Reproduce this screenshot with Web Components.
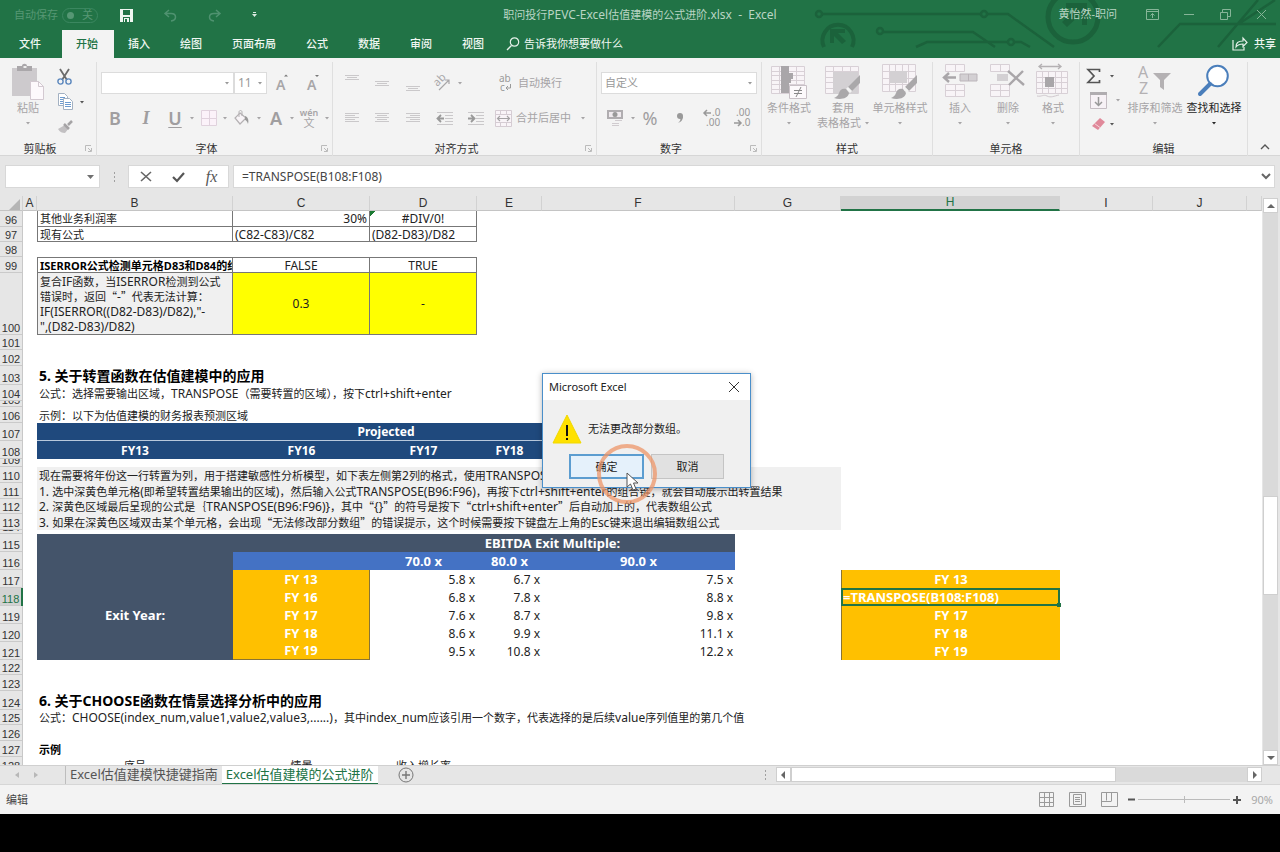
<!DOCTYPE html>
<html lang="zh-CN">
<head>
<meta charset="utf-8">
<title>职问投行PEVC-Excel估值建模的公式进阶.xlsx - Excel</title>
<style>
html,body{height:100%;margin:0}
body{background:#000;font:11px/16px "Noto Sans","Noto Sans CJK SC",sans-serif;color:#262626}
</style>
</head>
<body>
<xl-app></xl-app>
<script>
const BASE = `:host,*{box-sizing:border-box}
button{font:inherit;color:inherit;background:none;border:0;padding:0;margin:0;display:flex;align-items:center;justify-content:center}
input,select{font:inherit;color:inherit;margin:0;padding:0;border:0;border-radius:0;background:none;outline:none;min-width:0}
.k{font-family:"Noto Sans CJK SC",sans-serif;font-size:11px}`;

function define(name, css, html) {
  const tpl = document.createElement('template');
  customElements.define(name, class extends HTMLElement {
    connectedCallback() {
      if (this.shadowRoot) return;
      const root = this.attachShadow({ mode: 'open' });
      tpl.innerHTML = `<style>${BASE}${css}</style>` + (typeof html === 'function' ? html(this) : html);
      root.append(tpl.content.cloneNode(true));
    }
  });
}

/* Chinese runs are set one step smaller than the Latin text around them. */
const mix = (t) => t.replace(/[“”\u3000-\u9fff\uff00-\uffef]+/g, (m) => `<span class="k">${m}</span>`);

const lines = (list) => list.map(([a, y, b]) => `<path d="M${a} ${y}.5H${b}"/>`).join('');
const L = '#d8d0d6';
const grid = (x, y, w, h, c, r) => {
  let d = `M${x}.5 ${y}.5h${w}v${h}h-${w}z`;
  for (let i = 1; i < c; i++) d += `M${x + Math.round(w * i / c)}.5 ${y}.5v${h}`;
  for (let i = 1; i < r; i++) d += `M${x}.5 ${y + Math.round(h * i / r)}.5h${w}`;
  return `<path d="${d}" fill="#f8f4f7" stroke="${L}"/>`;
};
const BRUSH = `<path d="M35 11v8l-8 8-4-4z" fill="#aaa8aa"/><path d="M23 23l4 4-2 2-4-4z" fill="#f3f3f3"/><path d="M21 25c-4-1-6 1-7 4s-3 4-5 5c6 2 14 1 15-5z" fill="#aaa8aa"/>`;
const ICONS = {
  arrow: [4, 2, `<path d="M0 0h4L2 2.500z" fill="currentColor"/>`],
  arrowBig: [7, 4, `<path d="M0 0h7L3.500 4z" fill="#707070"/>`],
  save: [13, 13, `<path d="M0 0h13v13H0z" fill="#eef6f0"/><path d="M3 1h7v5H3zM3 8h7v5H3z" fill="#217346"/><path d="M4 9h5v4H7v-3H5v3H4z" fill="#eef6f0"/>`],
  undo: [13, 13, `<path d="M5 1L1 4.500l4 3.500M1 4.500h6c6 0 6 7 0 7.500" fill="none" stroke="#4f9270" stroke-width="1.500"/>`],
  redo: [13, 13, `<path d="M8 1l4 3.500L8 8M12 4.500H6c-6 0-6 7 0 7.500" fill="none" stroke="#4f9270" stroke-width="1.500"/>`],
  qat: [5, 6, `<path d="M1 .5h3" stroke="#dcebe2"/><path d="M0 2h5L2.500 5z" fill="#dcebe2"/>`],
  ribbonOpt: [13, 11, `<path d="M.5.5h12v10H.5zM.5 2.500h12M6.500 9V4.500M4.500 6.500l2-2 2 2" fill="none" stroke="#86b598"/>`],
  min: [11, 11, `<path d="M0 5.500h10" stroke="#86b598"/>`],
  restore: [11, 11, `<path d="M.5 3.500h7v7h-7zM2.500 3.500v-3h8v7h-3" fill="none" stroke="#86b598"/>`],
  close: [11, 11, `<path d="M1 1l9 9M10 1l-9 9" fill="none" stroke="#86b598"/>`],
  search: [14, 14, `<circle cx="8.500" cy="5" r="4.200" fill="none" stroke="#e4f0e8" stroke-width="1.200"/><path d="M5.500 8.500L1 13" stroke="#e4f0e8" stroke-width="1.300"/>`],
  share: [16, 14, `<path d="M1 3v10h11v-3M4 10c0-4 2-6 7-6V1l4 4.500-4 4V7C8 7 6 7.500 4 10z" fill="none" stroke="#e4f0e8" stroke-width="1.200"/>`],
  paste: [34, 36, `<path d="M1 4h25v28H1z" fill="#cdcacd"/><path d="M6 2h5c0-3 5-3 5 0h5v5H6z" fill="#aaa7aa"/><path d="M12.500 2h3v2h-3z" fill="#eee"/><path d="M19.500 17.500h8l5 5v13h-13z" fill="#fdf9fc" stroke="#d3c9d1"/><path d="M27.500 17.500v5h5" fill="none" stroke="#d3c9d1"/>`],
  cut: [16, 16, `<path d="M3 0l7 11M12 0L5 11" stroke="#6b6b6b" stroke-width="1.800"/><circle cx="3.500" cy="12.500" r="2.600" fill="none" stroke="#5b87bd" stroke-width="1.400"/><circle cx="11.500" cy="12.500" r="2.600" fill="none" stroke="#5b87bd" stroke-width="1.400"/>`],
  copy: [16, 17, `<path d="M1.500.5h6l3 3v9h-9z" fill="#fff" stroke="#a3b1c2"/><path d="M3 4.500h5M3 6.500h3M3 8.500h3M3 10.500h3" stroke="#6d9bcf"/><path d="M6.500 5.500h6l3 3v8h-9z" fill="#fff" stroke="#a3b1c2"/><path d="M8 9.500h6M8 11.500h6M8 13.500h6" stroke="#6d9bcf"/>`],
  brush: [15, 14, `<path d="M9 6l2 2-4 5c-3 0-5-1-7-4l7-4z" fill="#c2c0c2"/><path d="M6 4l5 5M10 5l4-4" stroke="#a5a3a5" stroke-width="2.500"/>`],
  growA: [13, 18, `<text x="0" y="16" font-size="14" font-weight="600" fill="#a8a6a8" font-family="Noto Sans">A</text><path d="M8 2.500l2-2 2 2z" fill="#777"/>`],
  shrinkA: [13, 18, `<text x="0" y="16" font-size="14" font-weight="600" fill="#a8a6a8" font-family="Noto Sans">A</text><path d="M8 1h4l-2 2z" fill="#777"/>`],
  border: [17, 17, `<path d="M.5.5h15v15H.5zM8.500.5v15M.5 8.500h15" fill="#fbf2f9" stroke="#e0d2dd"/>`],
  bucket: [16, 16, `<path d="M6 3l6 5-6 6-5-6z" fill="#f8f4f7" stroke="#b4b1b3" stroke-width="1.200"/><path d="M5 7V2c0-2 3-2 3 0v4" fill="none" stroke="#b4b1b3"/><path d="M11 6c3 1 4 4 3 8-1-3-2-4-3-4z" fill="#999"/>`],
  alTop: [16, 20, `<g stroke="#cac8ca">${lines([[1,2,15],[3,4,13],[1,6,15]])}</g>`],
  alMid: [16, 20, `<g stroke="#cac8ca">${lines([[1,8,15],[3,10,13],[1,12,15]])}</g>`],
  alBot: [16, 20, `<g stroke="#cac8ca">${lines([[1,13,15],[3,15,13],[1,17,15]])}</g>`],
  alL: [16, 12, `<g stroke="#cac8ca">${lines([[1,1,15],[1,3,11],[1,5,15],[1,7,11],[1,9,15]])}</g>`],
  alC: [16, 12, `<g stroke="#cac8ca">${lines([[1,1,15],[3,3,13],[1,5,15],[3,7,13],[1,9,15]])}</g>`],
  alR: [16, 12, `<g stroke="#cac8ca">${lines([[1,1,15],[5,3,15],[1,5,15],[5,7,15],[1,9,15]])}</g>`],
  orient: [18, 18, `<text x="1" y="11" font-size="11" fill="#a8a6a8" font-family="Noto Sans" transform="rotate(-45 5 8)">ab</text><path d="M6 16L16 6M12 6h4v4" fill="none" stroke="#a8a6a8" stroke-width="1.200"/>`],
  outdent: [18, 13, `<g stroke="#cac8ca">${lines([[1,0,17],[9,3,17],[9,6,17],[9,9,17],[1,12,17]])}</g><path d="M8 6.500H2M5 3L1.500 6.500 5 10" fill="none" stroke="#999" stroke-width="1.800"/>`],
  indent: [18, 13, `<g stroke="#cac8ca">${lines([[1,0,17],[9,3,17],[9,6,17],[9,9,17],[1,12,17]])}</g><path d="M1 6.500h6M4 3l3.500 3.500L4 10" fill="none" stroke="#999" stroke-width="1.800"/>`],
  wrap: [14, 17, `<text x="0" y="7" font-size="10" fill="#999" font-family="Noto Sans">ab</text><text x="1" y="16" font-size="10" fill="#999" font-family="Noto Sans">c</text><path d="M11.500 9v4H7M9 11l-2 2 2 2" fill="none" stroke="#999"/>`],
  merge: [17, 17, `<path d="M.5.5h16v16H.5zM.5 4.500h16M.5 12.500h16M5.500.5v4M11.500.5v4M5.500 12.500v4M11.500 12.500v4" fill="#f9f4f8" stroke="#d5ccd3"/><path d="M2 8.500h13M5 6L2.500 8.500 5 11M12 6l2.500 2.500L12 11" fill="none" stroke="#a5a3a5" stroke-width="1.200"/>`],
  money: [18, 18, `<path d="M1 1h16v9H1z" fill="#b0adb0"/><path d="M3 3h12v5H3z" fill="#efeaee"/><circle cx="9" cy="5.500" r="2.500" fill="#999"/><path d="M9 11.500h7M6 14.500h7M6 16.500h7" stroke="#d0cbcf"/>`],
  comma: [8, 12, `<circle cx="4" cy="4" r="3" fill="#999"/><path d="M7 4c0 4-2 6-5 7 2-2 3-3 2-5z" fill="#999"/>`],
  decL: [18, 20, `<g font-size="10" fill="#999" font-family="Noto Sans"><text x="9" y="8">.0</text><text x="3" y="18">.00</text></g><path d="M8 5H2M4 2L1 5l3 3" fill="none" stroke="#999" stroke-width="1.500"/>`],
  decR: [18, 20, `<g font-size="10" fill="#999" font-family="Noto Sans"><text x="3" y="8">.00</text><text x="9" y="18">.0</text></g><path d="M1 15h6M5 12l3 3-3 3" fill="none" stroke="#999" stroke-width="1.500"/>`],
  cond: [36, 36, grid(0,2,33,27,4,6) + `<path d="M10 2h8v7h4v6h-2v4h-2v10h-8z" fill="#a9a6a9"/><path d="M18.500 21.500h17v13h-17z" fill="#fcf9fb" stroke="#c8c0c6"/><path d="M23 26.500h8M23 29.500h8M30 23l-5 10" stroke="#888"/>`],
  tblfmt: [36, 36, grid(0,2,33,27,4,5) + `<path d="M8 8h25v22H8z" fill="#d3d0d3"/>` + BRUSH],
  cellstyle: [36, 36, grid(0,0,33,27,5,4) + `<path d="M8 7h17v12H8z" fill="#d3d0d3"/>` + BRUSH],
  insert: [36, 34, grid(3,0,19,7,2,1) + grid(3,20,19,12,2,2) + `<path d="M18 10h17v7H18z" fill="#d3d0d3" stroke="#bbb5ba"/><path d="M26.500 10v7" stroke="#bbb5ba"/><path d="M2 13.500h12M7 9l-5 4.500L7 18" fill="none" stroke="#a9a6a9" stroke-width="2.400"/>`],
  del: [36, 34, grid(0,0,19,7,2,1) + grid(0,20,19,12,2,2) + `<path d="M7 10h11v7H7z" fill="#d3d0d3"/><path d="M18 7l16 14M33 7L19 21" fill="none" stroke="#a9a6a9" stroke-width="2.400"/>`],
  format: [34, 34, `<path d="M3 2.500h22M6 0L3 2.500 6 5M22 0l3 2.500L22 5" fill="none" stroke="#b4b1b3" stroke-width="1.300"/>` + grid(0,7,31,22,5,4) + `<path d="M9 13h9v10H9z" fill="#a9a6a9"/><path d="M1 32c5 1 6-2 10 0s7 0 12-1" fill="none" stroke="#d0c8ce"/>`],
  sigma: [15, 16, `<path d="M13.500 4V1.500H2L8 8l-6 6.500h11.500V12" fill="none" stroke="#555" stroke-width="1.700"/>`],
  fill: [17, 17, `<path d="M.5.5h16v16H.5z" fill="#f7f2f6" stroke="#c5bdc3"/><path d="M0 0h17v3H0z" fill="#b0adb0"/><path d="M8.500 5v8M5 10l3.500 3.500L12 10" fill="none" stroke="#999" stroke-width="1.500"/>`],
  eraser: [15, 14, `<path d="M9 1l5 4-7 8-6-4z" fill="#e0899a"/><path d="M3.500 6.500l5.500 4" stroke="#f6d5dc"/>`],
  sort: [34, 32, `<g font-size="16" fill="#b4b1b3" font-family="Noto Sans"><text x="0" y="14">A</text><text x="1" y="30">Z</text></g><path d="M15 9h18l-7 7v10l-4-3v-7z" fill="#b4b1b3"/>`],
  find: [34, 34, `<circle cx="20.500" cy="12" r="10.300" fill="#fff" stroke="#4a7ebb" stroke-width="2"/><path d="M13 20L3 30" stroke="#4a7ebb" stroke-width="4" stroke-linecap="round"/>`],
  launch: [7, 7, `<path d="M.5 6V.5H6M3 3l3 3M6.500 3v3.500H3" fill="none" stroke="currentColor"/>`],
  collapse: [10, 6, `<path d="M1 5l4-4 4 4" fill="none" stroke="#555" stroke-width="1.400"/>`],
  dots: [3, 12, `<path d="M1 1h1v2H1zM1 5h1v2H1zM1 9h1v2H1z" fill="#a0a0a0"/>`],
  cancel: [12, 11, `<path d="M1 1l10 9M11 1L1 10" stroke="#666" stroke-width="1.600"/>`],
  ok: [13, 11, `<path d="M1 6l4 4 7-8" fill="none" stroke="#555" stroke-width="2.200"/>`],
  down: [10, 7, `<path d="M1 1l4 4 4-4" fill="none" stroke="#666" stroke-width="2"/>`],
  corner: [11, 11, `<path d="M11 0v11H0z" fill="#b5b5b5"/>`],
  tl: [4, 6, `<path d="M4 0v6L0 3z" fill="#b8b8b8"/>`],
  tr: [4, 6, `<path d="M0 0v6l4-3z" fill="#b8b8b8"/>`],
  sl: [4, 8, `<path d="M4 0v8L0 4z" fill="#666"/>`],
  sr: [4, 8, `<path d="M0 0v8l4-4z" fill="#666"/>`],
  su: [8, 4, `<path d="M0 4h8L4 0z" fill="#666"/>`],
  sd: [8, 4, `<path d="M0 0h8L4 4z" fill="#666"/>`],
  add: [16, 16, `<circle cx="8" cy="8" r="7" fill="none" stroke="#777"/><path d="M8 4v8M4 8h8" stroke="#777" stroke-width="1.400"/>`],
  vNormal: [15, 15, `<path d="M.5.5h14v14H.5zM5.500.5v14M10.500.5v14M.5 5.500h14M.5 10.500h14" fill="none" stroke="#9a9a9a"/>`],
  vPage: [17, 15, `<path d="M.5.5h16v14H.5zM4.500 2.500h8v10h-8zM6 5.500h5M6 7.500h5M6 9.500h5" fill="none" stroke="#9a9a9a"/>`],
  vBreak: [17, 15, `<path d="M.5.5h16v14H.5zM5.500.5v8M10.500.5v8.500M.5 9.500h10" fill="none" stroke="#9a9a9a"/>`],
  minus: [7, 3, `<path d="M0 1.500h7" stroke="#555" stroke-width="2"/>`],
  plus: [8, 8, `<path d="M4 0v8M0 4h8" stroke="#555" stroke-width="2"/>`],
  warn: [30, 30, `<path d="M15 1l14 28H1z" fill="#ffe100" stroke="#f0d800"/><path d="M15 11v11" stroke="#111" stroke-width="2"/><path d="M14 24h2v2h-2z" fill="#111"/>`],
  dlgClose: [10, 10, `<path d="M0 0l10 10M10 0L0 10" stroke="#333"/>`],
  cursor: [15, 20, `<path d="M1 1v14l3.500-3 2.500 6 3-1-2.500-6H12z" fill="#fff" stroke="#555"/>`],
  circuit: [480, 58, `<g fill="none" stroke="#1b623b" stroke-width="2.500"><circle cx="19" cy="14" r="3"/><path d="M22 14h159M187 14h21l46 33"/><circle cx="184" cy="14" r="3"/><circle cx="80" cy="31" r="3"/><path d="M83 32h90l22 15M116 47l11-5h81"/><circle cx="211" cy="42" r="3"/><path d="M215 42h6l9 5M358 47l22-23h96M418 47L458 0M440 23L475 0"/><path d="M24 47a15.500 15.500 0 1 1 28 0" stroke-width="4"/><circle cx="273" cy="17" r="25" stroke-width="5"/></g><path d="M30 29h15v4h-7l8 8-4 3-8-8v7h-4z" fill="#1b623b"/><path d="M266 3h21v22h-5V13l-15 14-5-5L277 8h-11z" fill="#1b623b"/>`]
};

define('xl-icon', `:host{display:block;flex:none;line-height:0}svg{display:block;overflow:visible}`, (el) => {
  const [w, h, body] = ICONS[el.getAttribute('name')];
  return `<svg width="${w}" height="${h}" viewBox="0 0 ${w} ${h}" aria-hidden="true">${body}</svg>`;
});
const I = (n) => `<xl-icon name="${n}"></xl-icon>`;
const B = (n, label) => `<button aria-label="${label}">${I(n)}</button>`;
const AR = `<button aria-label="更多选项">${I('arrow')}</button>`;

define('xl-header', `
:host{display:block;position:relative;background:#217346;color:#b9d5c4;overflow:hidden}
.art{position:absolute;right:0;top:0}
.title{position:relative;display:grid;grid-template-columns:1fr auto 1fr;height:30px;align-items:center}
.doc{font-size:12px;padding-bottom:2px}
.left,.right{display:flex;align-items:center;padding-bottom:2px}
.left{padding:0 0 0 14px;color:#569774}
.toggle{width:36px;height:15px;margin:0 22px 0 4px;border:1px solid #3b8760;border-radius:8px;justify-content:space-between;padding:0 4px}
.toggle i{width:7px;height:7px;border-radius:50%;background:#569774}
.left .qat{display:flex;gap:31px;align-items:center}
.right{justify-content:flex-end;gap:25px;padding-right:13px}
.right span{margin-right:4px}
nav{position:relative;display:flex;height:28px;align-items:stretch;color:#f0f7f2}
nav a{color:inherit;text-decoration:none;display:flex;align-items:center;justify-content:center;padding:0 16px 0 14px;font-weight:500}
nav a:first-child{padding:0 21px 0 19px}
nav a.on{background:#f3f3f3;color:#217346}
.tell{gap:4px;margin-left:6px}
.share{margin-left:auto;gap:6px;margin-right:4px;font-weight:500}`,
`<div class="art">${I('circuit')}</div>
<div class="title">
 <div class="left"><span>自动保存</span><button class="toggle" role="switch" aria-checked="false" aria-label="自动保存"><i></i>关</button>
  <div class="qat">${B('save','保存')}${B('undo','撤消')}${B('redo','恢复')}${B('qat','自定义快速访问工具栏')}</div></div>
 <div class="doc">${mix('职问投行PEVC-Excel估值建模的公式进阶.xlsx')} &nbsp;-&nbsp; Excel</div>
 <div class="right"><span>黄怡然-职问</span>${B('ribbonOpt','功能区显示选项')}${B('min','最小化')}${B('restore','向下还原')}${B('close','关闭')}</div>
</div>
<nav>${['文件','开始','插入','绘图','页面布局','公式','数据','审阅','视图'].map((t) => `<a href="#"${t === '开始' ? ' class="on"' : ''}>${t}</a>`).join('')}
<button class="tell">${I('search')}告诉我你想要做什么</button><button class="share">${I('share')}共享</button></nav>`);

define('xl-select', `
:host{display:flex;position:relative;height:22px;background:#fff;border:1px solid #dcdcdc;color:#999;align-items:center}
select{appearance:none;width:100%;height:100%;padding-left:3px}
:host([num]) select{font-size:12px}
xl-icon{position:absolute;right:4px}`,
(el) => `<select aria-label="${el.getAttribute('label')}"><option>${el.getAttribute('value') || ''}</option></select>${I('arrow')}`);

define('xl-group', `
:host{display:flex;flex-direction:column;flex:none;border-right:1px solid #dfdfdf;height:94px}
.body{flex:1;min-height:0}
.foot{display:flex;height:15px;align-items:center;color:#333}
.foot span{flex:1;text-align:center}
.foot button{width:16px;height:15px;color:#bbb}`,
(el) => `<div class="body"><slot></slot></div><div class="foot"><span>${el.getAttribute('label')}</span>${el.hasAttribute('launcher') ? B('launch', el.getAttribute('label') + '设置') : ''}</div>`);

define('xl-big', `
:host{display:block;color:#a6a4a6}
:host([active]){color:#262626}
button{flex-direction:column;justify-content:flex-start;width:100%}
.pic{height:36px;display:flex;align-items:flex-start}
.txt{line-height:15px;white-space:nowrap}
.row{display:flex;align-items:center;gap:4px;height:15px}`,
(el) => `<button><span class="pic">${I(el.getAttribute('icon'))}</span><span class="txt">${el.getAttribute('label')}</span><span class="row">${el.getAttribute('second') || ''}${I('arrow')}</span></button>`);

define('xl-ribbon', `
:host{display:flex;background:#f3f3f3;height:98px;padding-top:4px;border-bottom:1px solid #d6d6d6;color:#a6a4a6}
.clip{display:flex;padding-top:2px}
.clip xl-big{width:56px}
.clip .col{display:grid;grid-template-columns:18px 16px;grid-auto-rows:25px;align-items:center;color:#555}
.rows{padding:10px 4px 0;display:grid;gap:13px}
.r{display:grid;height:22px;align-items:center;justify-items:stretch}
.t{font-size:18px;font-weight:600;line-height:22px;color:#a09ea0}
.t.p{font-weight:400}
.s{font-family:"Liberation Serif",serif;font-style:italic}
.u{text-decoration:underline;text-decoration-thickness:1px;text-underline-offset:2px}
.w{line-height:10px;flex-direction:column;display:flex}
.w .py{font-size:9px;font-weight:600}
.f1{grid-template-columns:133px 33px 30px 32px}
.f2{grid-template-columns:28px 34px 24px 10px 24px 8px 26px 8px 26px 6px 28px 8px}
.a1{grid-template-columns:30px 30px 32px 26px 10px 1fr}
.a2{grid-template-columns:30px 30px 32px 32px 30px 1fr}
.lab{gap:4px;justify-content:flex-start}
.a1 .lab{padding-left:34px;gap:5px}
.a2 .lab{padding-left:4px}
.lab.m xl-icon:last-child{margin-left:6px}
.n2{grid-template-columns:28px 8px 26px 34px 30px 30px}
.big{display:flex;padding-top:2px}
.tools{display:grid;grid-template-columns:24px 16px;grid-auto-rows:24px;align-items:center;padding-left:6px}
.dark{color:#555}
.end{margin:auto 10px 0 auto;padding-bottom:5px}`,
`<xl-group label="剪贴板" launcher style="width:97px"><div class="clip"><xl-big icon="paste" label="粘贴"></xl-big>
 <div class="col">${B('cut','剪切')}<i></i>${B('copy','复制')}${AR}${B('brush','格式刷')}</div></div></xl-group>
<xl-group label="字体" launcher style="width:236px"><div class="rows"><div class="r f1"><xl-select label="字体"></xl-select><xl-select num label="字号" value="11"></xl-select>${B('growA','增大字号')}${B('shrinkA','减小字号')}</div>
 <div class="r f2"><button class="t">B</button><button class="t s">I</button><button class="t u">U</button>${AR}${B('border','边框')}${AR}${B('bucket','填充颜色')}${AR}<button class="t">A</button>${AR}<button class="w"><span class="py">wén</span><span>文</span></button>${AR}</div></div></xl-group>
<xl-group label="对齐方式" launcher style="width:264px"><div class="rows"><div class="r a1">${B('alTop','顶端对齐')}${B('alMid','垂直居中')}${B('alBot','底端对齐')}${B('orient','方向')}${AR}<button class="lab">${I('wrap')}自动换行</button></div>
 <div class="r a2">${B('alL','左对齐')}${B('alC','居中')}${B('alR','右对齐')}${B('outdent','减少缩进量')}${B('indent','增加缩进量')}<button class="lab m">${I('merge')}合并后居中 ${I('arrow')}</button></div></div></xl-group>
<xl-group label="数字" launcher style="width:165px"><div class="rows"><xl-select label="数字格式" value="自定义"></xl-select>
 <div class="r n2">${B('money','会计数字格式')}${AR}<button class="t p">%</button>${B('comma','千位分隔样式')}${B('decL','增加小数位数')}${B('decR','减少小数位数')}</div></div></xl-group>
<xl-group label="样式" style="width:171px"><div class="big"><xl-big style="width:54px" icon="cond" label="条件格式"></xl-big><xl-big style="width:54px" icon="tblfmt" label="套用" second="表格格式"></xl-big><xl-big style="width:60px" icon="cellstyle" label="单元格样式"></xl-big></div></xl-group>
<xl-group label="单元格" style="width:147px"><div class="big"><xl-big style="width:54px" icon="insert" label="插入"></xl-big><xl-big style="width:42px" icon="del" label="删除"></xl-big><xl-big style="width:48px" icon="format" label="格式"></xl-big></div></xl-group>
<xl-group label="编辑" style="width:168px"><div class="big"><div class="tools"><span class="dark">${B('sigma','自动求和')}</span><span class="dark">${AR}</span>${B('fill','填充')}${AR}${B('eraser','清除')}<span class="dark">${AR}</span></div><xl-big style="width:58px" icon="sort" label="排序和筛选"></xl-big><xl-big active style="width:60px" icon="find" label="查找和选择"></xl-big></div></xl-group>
<div class="end">${B('collapse','折叠功能区')}</div>`);

define('xl-formula', `
:host{display:flex;background:#e6e6e6;height:40px;padding:9px 5px 8px;align-items:stretch;font-size:12px;color:#444}
div{background:#fff;border:1px solid #d8d8d8;display:flex;align-items:center}
.name{width:95px}.name input{width:70px;flex:1}.name button{width:18px}
.grip{width:28px}
.act{width:101px;justify-content:space-around}
.act button{width:30px}
.fx{font:italic 16px/20px "Liberation Serif",serif;color:#555}
.in{flex:1;margin-left:4px;padding:0 2px 0 8px}.in input{flex:1}.in button{width:12px}`,
`<div class="name"><input aria-label="名称框">${B('arrowBig','名称列表')}</div><button class="grip" aria-label="调整">${I('dots')}</button>
<div class="act">${B('cancel','取消')}${B('ok','输入')}<button class="fx">fx</button></div>
<div class="in"><input aria-label="编辑栏" value="=TRANSPOSE(B108:F108)">${B('down','展开编辑栏')}</div>`);

const COLS = 'ABCDEFGHIJK'.split('');
const WIDTHS = [14, 196, 137, 107, 65, 193, 106, 219, 93, 94];
const years = ['FY 13', 'FY 16', 'FY 17', 'FY 18', 'FY 19'];
const vals = [['5.8 x','6.7 x','7.5 x'],['6.8 x','7.8 x','8.8 x'],['7.6 x','8.7 x','9.8 x'],['8.6 x','9.9 x','11.1 x'],['9.5 x','10.8 x','12.2 x']];
/* [row number, height, {column: [text, classes, colspan, rowspan]}] */
const ROWS = [
  [96, 16, { B: ['其他业务利润率', 'bl bb br'], C: ['30%', 'right bb br'], D: ['#DIV/0!', 'mid bb br err'] }],
  [97, 15, { B: ['现有公式', 'bl bb br'], C: ['(C82-C83)/C82', 'bb br'], D: ['(D82-D83)/D82', 'bb br'] }],
  [98, 15, {}],
  [99, 16, { B: ['ISERROR公式检测单元格D83和D84的结果', 'bl bt bb br b clip'], C: ['FALSE', 'mid bt bb br'], D: ['TRUE', 'mid bt bb br'] }],
  [100, 62, { B: ['复合IF函数，当ISERROR检测到公式<br>错误时，返回“-”代表无法计算：<br>IF(ISERROR((D82-D83)/D82),"-<br>",(D82-D83)/D82)', 'bl bb br grey'], C: ['0.3', 'mid bb br yellow'], D: ['-', 'mid bb br yellow'] }],
  [101, 15, {}], [102, 16, {}],
  [103, 19, { B: ['5. 关于转置函数在估值建模中的应用', 'h', 6] }],
  [104, 16, { B: ['公式：选择需要输出区域，TRANSPOSE（需要转置的区域），按下ctrl+shift+enter', '', 6] }],
  [105, 6, {}],
  [106, 16, { B: ['示例：以下为估值建模的财务报表预测区域', '', 6] }],
  [107, 18, { B: ['Projected', 'navy mid lb', 5] }],
  [108, 18, { B: ['FY13', 'navy mid'], C: ['FY16', 'navy mid'], D: ['FY17', 'navy mid'], E: ['FY18', 'navy mid'], F: ['FY19', 'navy mid'] }],
  [109, 8, {}],
  [110, 16, { B: ['现在需要将年份这一行转置为列，用于搭建敏感性分析模型，如下表左侧第2列的格式，使用TRANSPOSE函数', 'grey', 6] }],
  [111, 16, { B: ['1. 选中深黄色单元格(即希望转置结果输出的区域)，然后输入公式TRANSPOSE(B96:F96)，再按下ctrl+shift+enter的组合键，就会自动展示出转置结果', 'grey', 6] }],
  [112, 15, { B: ['2. 深黄色区域最后呈现的公式是｛TRANSPOSE(B96:F96)}，其中“{}”的符号是按下“ctrl+shift+enter”后自动加上的，代表数组公式', 'grey', 6] }],
  [113, 16, { B: ['3. 如果在深黄色区域双击某个单元格，会出现“无法修改部分数组”的错误提示，这个时候需要按下键盘左上角的Esc键来退出编辑数组公式', 'grey', 6] }],
  [114, 4, {}],
  [115, 18, { B: ['', 'slate'], C: ['', 'slate'], D: ['EBITDA Exit Multiple:', 'slate mid', 3] }],
  [116, 18, { B: ['', 'slate'], C: ['', 'blue'], D: ['70.0 x', 'blue mid'], E: ['80.0 x', 'blue mid'], F: ['90.0 x', 'blue mid'] }],
  ...years.map((y, i) => [117 + i, 18, {
    ...(i ? {} : { B: ['Exit Year:', 'slate mid', 1, 5] }),
    C: [y, 'gold mid br' + (i === 4 ? ' bb' : '')],
    D: [vals[i][0], 'right'], E: [vals[i][1], 'right'], F: [vals[i][2], 'right'],
    H: i === 1 ? ['=TRANSPOSE(B108:F108)', 'gold edit'] : [y, 'gold mid bl']
  }]),
  [122, 15, {}], [123, 16, {}],
  [124, 19, { B: ['6. 关于CHOOSE函数在情景选择分析中的应用', 'h', 6] }],
  [125, 15, { B: ['公式：CHOOSE(index_num,value1,value2,value3,......)，其中index_num应该引用一个数字，代表选择的是后续value序列值里的第几个值', '', 6] }],
  [126, 16, {}],
  [127, 16, { B: ['示例', 'b'] }],
  [128, 16, { B: ['序号', 'mid'], C: ['情景', 'mid'], D: ['收入增长率', 'mid'] }]
];
function sheetHTML() {
  const busy = {};
  let body = '';
  for (const [n, h, cells] of ROWS) {
    body += `<tr><th scope="row" class="${n === 118 ? 'on' : ''}"><div style="height:${h}px">${n}</div></th>`;
    for (let c = 0; c < COLS.length; c++) {
      const k = COLS[c];
      if (busy[k] > 0) { busy[k]--; continue; }
      const [t = '', cls = '', cs = 1, rs = 1] = cells[k] || [];
      if (rs > 1) busy[k] = rs - 1;
      const text = /\bh\b/.test(cls) ? t : mix(t);
      body += `<td class="${cls}"${cs > 1 ? ` colspan="${cs}"` : ''}${rs > 1 ? ` rowspan="${rs}"` : ''}><div style="height:${h * rs}px"><span>${text}</span></div></td>`;
      c += cs - 1;
    }
    body += '</tr>';
  }
  return `<table><colgroup><col style="width:23px">${WIDTHS.map((w) => `<col style="width:${w}px">`).join('')}<col></colgroup>
<thead><tr><th class="cn">${I('corner')}</th>${COLS.map((c) => `<th scope="col" class="${c === 'H' ? 'on' : ''}">${c === 'K' ? '' : c}</th>`).join('')}</tr></thead><tbody>${body}</tbody></table>`;
}
define('xl-sheet', `
:host{display:block;background:#fff;overflow:hidden;min-height:0;color:#222;font-size:12px}
table{table-layout:fixed;width:100%;border-collapse:separate;border-spacing:0}
td,th{padding:0}
th{font:12px/13px "Liberation Sans",sans-serif;color:#333;background:#e6e6e6}
thead th{height:15px;border-right:1px solid #d2d2d2;border-bottom:1px solid #c4c4c4;vertical-align:bottom}
thead th.on{background:#d2d2d2;border-bottom:2px solid #217346;color:#217346}
.cn xl-icon{float:right;margin-right:2px}
tbody th{font-size:11px;border-right:1px solid #c8c8c8}
tbody th div{display:flex;align-items:flex-end;justify-content:center;overflow:hidden;border-bottom:1px solid #cacaca;line-height:11px}
tbody th.on{background:#d2d2d2;color:#217346;border-right:2px solid #217346}
td div{display:flex;align-items:center;padding:0 2px;white-space:nowrap;line-height:15px}
td .k{line-height:1}
.mid div{justify-content:center}.right div{justify-content:flex-end}
.clip div{overflow:hidden}
.bl div{border-left:1px solid #777}.br div{border-right:1px solid #777}.bb div{border-bottom:1px solid #777}.bt div{border-top:1px solid #777}
.err div{background:linear-gradient(135deg,#1c7a33 4px,transparent 4px)}
.b{font-weight:700;font-size:11px;color:#000}
.h{font-weight:700;font-size:14px;color:#000}
.grey{background:#f0f0f0}.yellow{background:#ff0}
.navy,.slate,.blue,.gold{font-weight:700;font-size:13px;color:#fff}
.navy{background:#1f497d;font-size:12px}.slate{background:#44546a}.blue{background:#4472c4}.gold{background:#ffc000}
.gold.bl div,.gold.br div{border-color:#8a7434}
.lb div{border-bottom:1px solid #b8c8dc}
.edit div{position:relative;border:2px solid #217346;padding:0}
.edit div::after{content:"";position:absolute;right:-3px;bottom:-3px;width:4px;height:4px;background:#217346}`, sheetHTML);

define('xl-scroll', `
:host{display:flex;background:#dadada}
:host([dir-v]){flex-direction:column}
button{flex:none;width:15px;height:15px;background:#fff;border:1px solid #cfcfcf}
i{display:block}.th{background:#fff;border:1px solid #cfcfcf}`,
(el) => { const v = el.hasAttribute('dir-v'); const [a, b, c] = el.getAttribute('parts').split(' ');
  return `${B(v ? 'su' : 'sl', '向前滚动')}<i style="flex:${a} 1 0"></i><i class="th" style="flex:${b} 1 0"></i><i style="flex:${c} 1 0"></i>${B(v ? 'sd' : 'sr', '向后滚动')}`; });

define('xl-tabs', `
:host{display:flex;height:20px;background:#e6e6e6;border-top:1px solid #d0d0d0;border-bottom:1px solid #d6d6d6;font-size:13px;color:#555;align-items:stretch}
.nav{display:flex;gap:15px;align-items:center;width:66px;padding-left:15px;border-right:1px solid #bdbdbd}
a{color:inherit;text-decoration:none;display:flex;align-items:center;padding:0 4px 2px;line-height:16px}
a.on{background:#fff;color:#217346;border-bottom:1px solid #217346;padding-bottom:1px}
.add{margin-left:20px}
.grip{margin-left:auto;width:20px}
xl-scroll{width:38%;margin:1px 18px 2px 0}`,
`<div class="nav">${B('tl','上一个工作表')}${B('tr','下一个工作表')}</div><a href="#">Excel估值建模快捷键指南</a><a href="#" class="on">Excel估值建模的公式进阶</a><button class="add" aria-label="新工作表">${I('add')}</button>
<button class="grip" aria-label="调整标签宽度">${I('dots')}</button><xl-scroll parts="0 325 131"></xl-scroll>`);

define('xl-status', `
:host{display:flex;height:29px;background:#f3f3f3;align-items:center;padding:0 7px 0 6px;color:#444}
.v{margin-left:auto;display:flex;gap:15px;margin-right:10px}
input{appearance:none;width:92px;height:9px;margin:0 3px;background:linear-gradient(#bbb,#bbb) center/100% 1px no-repeat}
input::-webkit-slider-thumb{appearance:none;width:1px;height:7px;background:#bbb}
.p{color:#a8a8a8;margin-left:10px}`,
`<span>编辑</span><div class="v">${B('vNormal','普通')}${B('vPage','页面布局')}${B('vBreak','分页预览')}</div>${B('minus','缩小')}<input type="range" aria-label="缩放" min="0" max="100" value="50">${B('plus','放大')}<span class="p">90%</span>`);

define('xl-dialog', `
:host{display:block;width:209px;background:#f0f0f0;border:1px solid #4a8fca;box-shadow:0 1px 6px rgba(0,0,0,.3);color:#222}
header{display:flex;height:26px;background:#fff;align-items:center;justify-content:space-between;padding:0 11px 1px 6px}
.msg{display:flex;align-items:center;gap:6px;padding:14px 10px 10px 9px}
.bt{display:flex;gap:7px;padding:0 26px 8px}
.bt button{flex:1;height:25px;background:#e1e1e1;border:1px solid #c4c4c4}
.bt .ok{background:#e5f1fb;border:2px solid #5c9dd0}`,
`<section role="alertdialog" aria-label="Microsoft Excel"><header><span>Microsoft Excel</span>${B('dlgClose','关闭')}</header>
<div class="msg">${I('warn')}<span>无法更改部分数组。</span></div>
<div class="bt"><button class="ok">确定</button><button>取消</button></div></section>`);

define('xl-app', `
:host{display:flex;flex-direction:column;height:100vh;padding-bottom:38px;position:relative;overflow:hidden}
xl-header,xl-ribbon,xl-formula,xl-tabs,xl-status{flex:none}
main{flex:1;min-height:0;display:grid;grid-template-columns:1fr 18px;grid-template-rows:100%;background:#e6e6e6}
main xl-scroll{margin:2px 2px 0 1px}
xl-dialog{position:absolute;left:542px;top:373px}
.ring{position:absolute;left:597px;top:444px;width:60px;height:60px;border:4px solid rgba(238,150,104,.75);border-radius:50%}
.cur{position:absolute;left:626px;top:472px}`,
`<xl-header></xl-header><xl-ribbon></xl-ribbon><xl-formula></xl-formula>
<main><xl-sheet></xl-sheet><xl-scroll dir-v parts="285 98 156"></xl-scroll></main>
<xl-tabs></xl-tabs><xl-status></xl-status>
<xl-dialog></xl-dialog><div class="ring"></div><div class="cur">${I('cursor')}</div>`);
</script>
</body>
</html>
